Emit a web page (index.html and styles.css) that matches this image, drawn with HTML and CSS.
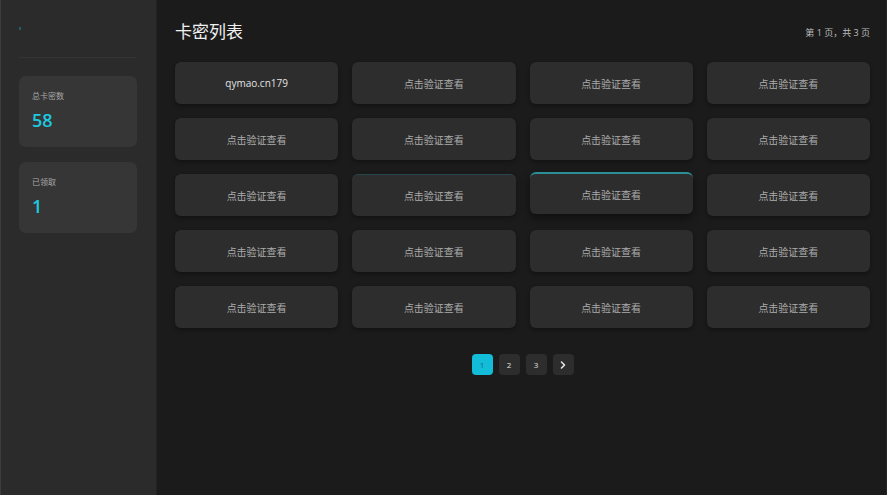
FILE: index.html
```html
<!DOCTYPE html>
<html lang="zh-CN">
<head>
    <meta charset="UTF-8">
    <meta name="viewport" content="width=device-width, initial-scale=1.0">
    <title>卡密列表</title>
    <link rel="stylesheet" href="styles.css">
</head>
<body>
    <div class="app">
        <div class="sidebar">
            <div class="logo"><span class="logo-dot"></span></div>
            <div class="stat">
                <div class="stat-label">总卡密数</div>
                <div class="stat-value">58</div>
            </div>
            <div class="stat">
                <div class="stat-label">已领取</div>
                <div class="stat-value">1</div>
            </div>
        </div>

        <div class="main">
            <div class="header">
                <h1>卡密列表</h1>
                <div class="page-info">第 1 页，共 3 页</div>
            </div>

            <div class="grid">
                <div class="card revealed">qymao.cn179</div>
                <div class="card">点击验证查看</div>
                <div class="card">点击验证查看</div>
                <div class="card">点击验证查看</div>

                <div class="card">点击验证查看</div>
                <div class="card">点击验证查看</div>
                <div class="card">点击验证查看</div>
                <div class="card">点击验证查看</div>

                <div class="card">点击验证查看</div>
                <div class="card glow-soft">点击验证查看</div>
                <div class="card glow">点击验证查看</div>
                <div class="card">点击验证查看</div>

                <div class="card">点击验证查看</div>
                <div class="card">点击验证查看</div>
                <div class="card">点击验证查看</div>
                <div class="card">点击验证查看</div>

                <div class="card">点击验证查看</div>
                <div class="card">点击验证查看</div>
                <div class="card">点击验证查看</div>
                <div class="card">点击验证查看</div>
            </div>

            <div class="pagination">
                <button class="page active">1</button>
                <button class="page">2</button>
                <button class="page">3</button>
                <button class="page next">
                    <svg width="8" height="8" viewBox="0 0 8 8"><path d="M2.5 1 L5.5 4 L2.5 7" fill="none" stroke="#e6e6e6" stroke-width="1.6" stroke-linecap="round" stroke-linejoin="round"/></svg>
                </button>
            </div>
        </div>
    </div>
</body>
</html>
```

FILE: styles.css
```css
body {
    margin: 0;
    padding: 0;
    background: #1b1b1b;
    font-family: "Open Sans", "Noto Sans CJK SC", sans-serif;
    color: #ddd;
}
.app {
    display: flex;
    width: 887px;
    height: 495px;
    box-sizing: border-box;
    border-left: 1px solid #3d3d3d;
    border-right: 1px solid #262626;
    overflow: hidden;
}
.sidebar {
    width: 156px;
    flex-shrink: 0;
    background: #2b2b2b;
    border-right: 1px solid #222;
    padding: 0 19px 0 18px;
    box-sizing: border-box;
}
.logo {
    height: 57px;
    border-bottom: 1px solid #343434;
    position: relative;
}
.logo-dot {
    position: absolute;
    left: 0;
    top: 27px;
    width: 2px;
    height: 3px;
    background: #1f5f66;
}
.stat {
    background: #363636;
    border-radius: 7px;
    height: 71px;
    margin-top: 18px;
    padding: 15px 13px 0;
    box-sizing: border-box;
}
.stat + .stat {
    margin-top: 15px;
}
.stat-label {
    font-size: 8px;
    line-height: 10px;
    color: #a8a8a8;
}
.stat-value {
    margin-top: 8px;
    font-size: 18px;
    line-height: 22px;
    font-weight: 600;
    color: #1ec8e0;
}
.main {
    flex: 1;
    padding: 20px 16px 0 18px;
    box-sizing: border-box;
}
.header {
    display: flex;
    justify-content: space-between;
    align-items: center;
    height: 24px;
}
.header h1 {
    margin: 0;
    font-size: 17px;
    font-weight: normal;
    line-height: 24px;
    color: #f0f0f0;
}
.page-info {
    font-size: 9px;
    color: #bcbcbc;
}
.grid {
    margin-top: 18px;
    display: grid;
    grid-template-columns: repeat(4, 1fr);
    grid-auto-rows: 42px;
    column-gap: 14px;
    row-gap: 14px;
}
.card {
    background: #2d2d2d;
    border-radius: 6px;
    box-shadow: 0 2px 4px rgba(0, 0, 0, 0.35);
    display: flex;
    align-items: center;
    justify-content: center;
    font-size: 10px;
    color: #ababab;
    box-sizing: border-box;
}
.card.revealed {
    color: #e2e2e2;
}
.card.glow-soft {
    border-top: 1px solid #28474c;
}
.card.glow {
    border-top: 2px solid #2a8f97;
    transform: translateY(-2px);
    box-shadow: 0 4px 8px rgba(0, 0, 0, 0.45);
}
.pagination {
    margin-top: 26px;
    display: flex;
    justify-content: center;
    gap: 6px;
}
.page {
    width: 21px;
    height: 21px;
    padding: 0;
    border: none;
    border-radius: 4px;
    background: #2d2d2d;
    color: #e0e0e0;
    font-family: "Open Sans", sans-serif;
    font-size: 8px;
    display: flex;
    align-items: center;
    justify-content: center;
    cursor: pointer;
}
.page.active {
    background: #13bcd8;
    color: #0d6f80;
}
```
